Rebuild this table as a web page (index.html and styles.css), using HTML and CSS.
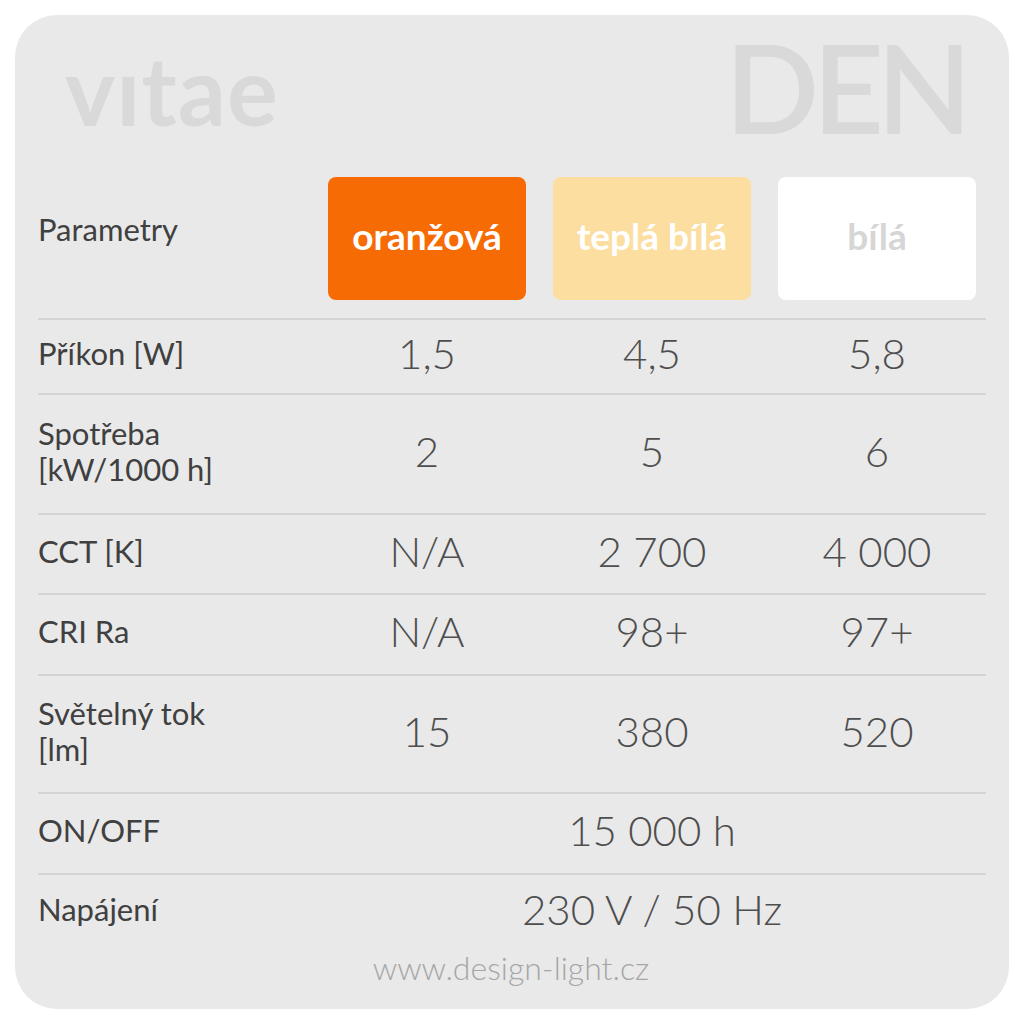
FILE: index.html
```html
<!DOCTYPE html>
<html lang="cs">
<head>
<meta charset="utf-8">
<title>vitae DEN</title>
<link rel="stylesheet" href="styles.css">
</head>
<body>
<div class="card">
  <header class="top">
    <div class="brand">vıtae</div>
    <div class="mode">DEN</div>
  </header>
  <div class="table">
    <div class="row head">
      <div class="label head-label">Parametry</div>
      <div class="chip chip-orange">oranžová</div>
      <div class="chip chip-warm">teplá bílá</div>
      <div class="chip chip-white">bílá</div>
    </div>
    <div class="row r1">
      <div class="label">Příkon [W]</div>
      <div class="val">1,5</div>
      <div class="val">4,5</div>
      <div class="val">5,8</div>
    </div>
    <div class="row r2">
      <div class="label">Spotřeba<br>[kW/1000 h]</div>
      <div class="val">2</div>
      <div class="val">5</div>
      <div class="val">6</div>
    </div>
    <div class="row r3">
      <div class="label">CCT [K]</div>
      <div class="val">N/A</div>
      <div class="val">2 700</div>
      <div class="val">4 000</div>
    </div>
    <div class="row r4">
      <div class="label">CRI Ra</div>
      <div class="val">N/A</div>
      <div class="val">98+</div>
      <div class="val">97+</div>
    </div>
    <div class="row r5">
      <div class="label">Světelný tok<br>[lm]</div>
      <div class="val">15</div>
      <div class="val">380</div>
      <div class="val">520</div>
    </div>
    <div class="row r6">
      <div class="label">ON/OFF</div>
      <div class="val val-wide">15 000 h</div>
    </div>
    <div class="row r7">
      <div class="label">Napájení</div>
      <div class="val val-wide">230 V / 50 Hz</div>
    </div>
  </div>
  <div class="footer">www.design-light.cz</div>
</div>
</body>
</html>
```
FILE: styles.css
```css
* { box-sizing: border-box; }

html, body {
  margin: 0;
  padding: 0;
  background: #ffffff;
}

body {
  font-family: Lato, "Noto Sans", "DejaVu Sans", sans-serif;
  width: 1024px;
  height: 1024px;
  padding: 15px;
}

.card {
  width: 994px;
  height: 994px;
  background: #e9e9e9;
  border-radius: 42px;
}

.top {
  height: 162px;
  display: flex;
  justify-content: space-between;
  align-items: flex-start;
}

.brand {
  margin-top: 27px;
  margin-left: 50px;
  font-size: 95px;
  line-height: 1;
  font-weight: 700;
  color: #d9d9d9;
  letter-spacing: 1px;
}

.mode {
  margin-top: 9px;
  margin-right: 36px;
  padding-right: 8px;
  font-size: 124px;
  line-height: 1;
  font-weight: 600;
  color: #d9d9d9;
  letter-spacing: -7px;
}

.table {
  margin-left: 23px;
  width: 948px;
}

.row {
  display: grid;
  grid-template-columns: 263px 198px 198px 198px;
  column-gap: 27px;
  align-items: center;
  border-top: 2px solid #d4d4d4;
  padding-bottom: 7px;
}

.head {
  border-top: none;
  height: 141px;
  padding-bottom: 0;
  align-items: start;
}

.label {
  font-size: 31px;
  line-height: 36px;
  color: #404040;
  font-weight: 400;
}

.head-label {
  margin-top: 34px;
}

.chip {
  height: 123px;
  border-radius: 8px;
  display: flex;
  align-items: center;
  justify-content: center;
  font-size: 37px;
  font-weight: 700;
  padding-bottom: 7px;
  color: #ffffff;
}

.chip-orange { background: #f76b05; }
.chip-warm { background: #fbdea0; }
.chip-white { background: #ffffff; color: #d6d6d6; }

.val {
  text-align: center;
  font-size: 42px;
  line-height: 48px;
  font-weight: 300;
  color: #4e4e4e;
}

.val-wide {
  grid-column: 2 / 5;
}

.r1 { height: 75px; }
.r2 { height: 120px; }
.r3 { height: 80px; }
.r4 { height: 81px; }
.r5 { height: 118px; }
.r6 { height: 81px; }
.r7 { height: 77px; }

.footer {
  text-align: center;
  font-size: 32px;
  line-height: 36px;
  font-weight: 300;
  color: #a6a6a6;
  padding-right: 2px;
}
```
